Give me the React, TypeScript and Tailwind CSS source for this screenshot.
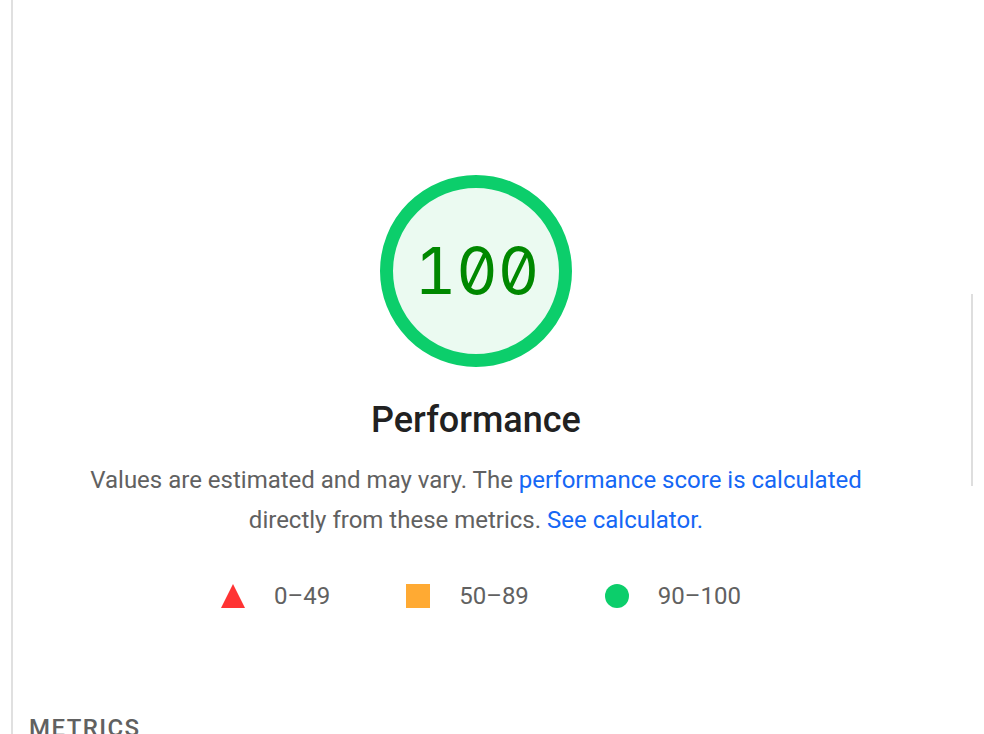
import React from "react";

function Gauge({ score }: { score: number }) {
	return (
		<div className="relative w-[192px] h-[192px]">
			<svg viewBox="0 0 192 192" className="absolute inset-0 w-full h-full">
				<circle cx="96" cy="96" r="89.5" fill="#ebfaf1" stroke="#0cce6b" strokeWidth="13" />
			</svg>
			<div className="absolute inset-0 flex items-center justify-center">
				<span className="font-['Inter',monospace] font-normal slashed-zero tabular-nums text-[64px] leading-none text-[#008800] pl-[2px]">
					{score}
				</span>
			</div>
		</div>
	);
}

function LegendItem({ icon, label }: { icon: React.ReactNode; label: string }) {
	return (
		<div className="flex items-center">
			<span className="flex items-center justify-center w-[24px] h-[24px]">{icon}</span>
			<span className="ml-[29px]">{label}</span>
		</div>
	);
}

export default function App() {
	return (
		<div className="w-[984px] h-[734px] overflow-hidden bg-white flex font-['Roboto',sans-serif]">
			<div className="ml-[11px] w-[2px] shrink-0 bg-[#e0e0e0]" />
			<div className="flex-1 flex flex-col pl-[16px] relative">
				<div className="mt-[4px] h-[2px] bg-[#dcdcdc] rounded-l-full" />
				<div className="absolute right-[11px] top-[294px] w-[2px] h-[192px] bg-[#dedede]" />
				<div className="w-[894px] flex flex-col items-center">
					<div className="mt-[171px]">
						<Gauge score={100} />
					</div>
					<h2 className="mt-[31px] text-[36px] leading-[44px] font-medium text-[#212121]">
						Performance
					</h2>
					<p className="mt-[18px] text-center text-[24px] leading-[40px] text-[#616161] w-[860px]">
						Values are estimated and may vary. The{" "}
						<a className="text-[#1567f5]">performance score is calculated</a>
						<br />
						directly from these metrics.{" "}
						<a className="text-[#1567f5]">See calculator.</a>
					</p>
					<div className="mt-[40px] flex items-center gap-[76px] text-[24px] leading-[32px] text-[#616161] pl-[10px]">
						<LegendItem
							label="0–49"
							icon={
								<svg width="24" height="24" viewBox="0 0 24 24">
									<polygon points="12,0 24,24 0,24" fill="#ff3333" />
								</svg>
							}
						/>
						<LegendItem
							label="50–89"
							icon={<span className="block w-[24px] h-[24px] bg-[#ffaa33]" />}
						/>
						<LegendItem
							label="90–100"
							icon={<span className="block w-[24px] h-[24px] rounded-full bg-[#0cce6b]" />}
						/>
					</div>
				</div>
				<div className="mt-[100px] text-[24px] leading-[32px] font-medium tracking-[0.06em] text-[#616161]">
					METRICS
				</div>
			</div>
		</div>
	);
}
